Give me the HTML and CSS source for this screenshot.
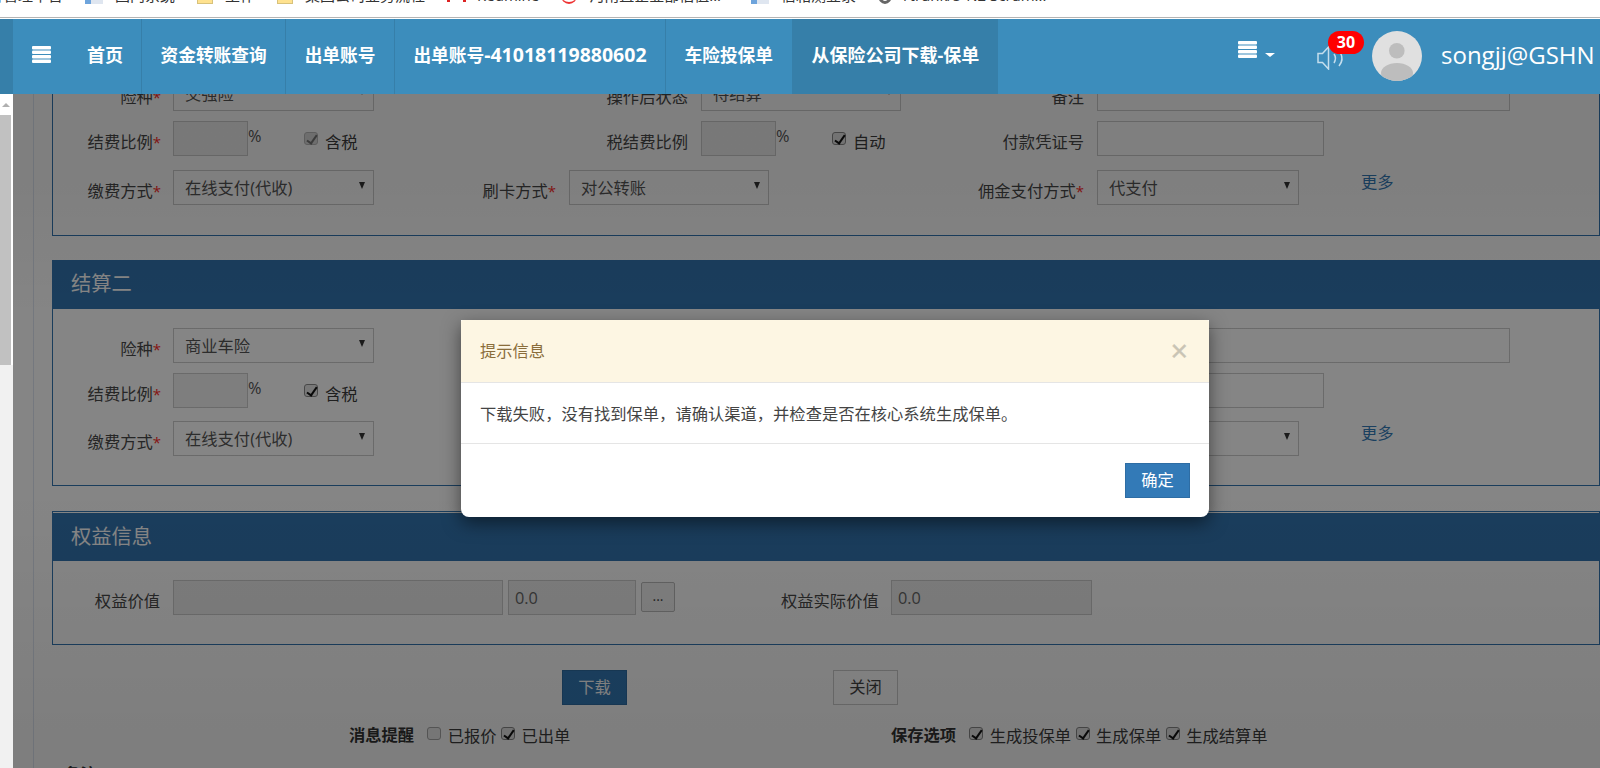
FILE: index.html
```html
<!DOCTYPE html>
<html lang="zh-CN">
<head>
<meta charset="utf-8">
<title>从保险公司下载-保单</title>
<link rel="stylesheet" href="styles.css">
</head>
<body>
<div class="page">
  <div class="bookmarks">
    <div class="bookmarks-track">
      <span class="bm-text bm-first">综合管理平台</span>
      <span class="bm-icon bm-page"></span><span class="bm-text">国内系统</span>
      <span class="bm-icon bm-folder"></span><span class="bm-text">工作</span>
      <span class="bm-icon bm-folder"></span><span class="bm-text">集团公司业务流程</span>
      <span class="bm-icon bm-red"></span><span class="bm-text">Redmine</span>
      <span class="bm-icon bm-swirl"></span><span class="bm-text bm-long">河南直企业部估值...</span>
      <span class="bm-icon bm-page"></span><span class="bm-text">信箱测登录</span>
      <span class="bm-icon bm-globe"></span><span class="bm-text">/trunk/5-N2 Scrum...</span>
    </div>
  </div>

  <nav class="navbar">
    <div class="nav-left">
      <div class="nav-toggle-edge"></div>
      <div class="nav-toggle">
        <svg class="bars" width="19" height="17" viewBox="0 0 19 17"><rect width="19" height="3.4" rx="1" y="0" fill="#fff"/><rect width="19" height="3.4" rx="1" y="4.5" fill="#fff"/><rect width="19" height="3.4" rx="1" y="9" fill="#fff"/><rect width="19" height="3.4" rx="1" y="13.6" fill="#fff"/></svg>
      </div>
      <a class="nav-item nav-home">首页</a>
      <a class="nav-item">资金转账查询</a>
      <a class="nav-item">出单账号</a>
      <a class="nav-item">出单账号<span class="nav-num">-41018119880602</span></a>
      <a class="nav-item">车险投保单</a>
      <a class="nav-item nav-active">从保险公司下载-保单</a>
    </div>
    <div class="nav-right">
      <svg class="bars" width="19" height="17" viewBox="0 0 19 17"><rect width="19" height="3.4" rx="1" y="0" fill="#fff"/><rect width="19" height="3.4" rx="1" y="4.5" fill="#fff"/><rect width="19" height="3.4" rx="1" y="9" fill="#fff"/><rect width="19" height="3.4" rx="1" y="13.6" fill="#fff"/></svg>
      <span class="nav-caret"></span>
      <span class="speaker">
        <svg width="29" height="24" viewBox="0 0 29 24" fill="none" stroke="#c4deed" stroke-width="1.5"><path d="M1 7.5h4.5L11.5 1v22l-6-6.5H1z"/><path d="M17 8c1.800 2.500 1.800 6 0 9"/><path d="M23.500 7c2.200 4 1.800 9-1.500 13"/></svg>
        <span class="badge">30</span>
      </span>
      <svg class="avatar" width="50" height="50" viewBox="0 0 50 50"><defs><clipPath id="avatar-clip"><circle cx="25" cy="25" r="25"/></clipPath></defs><circle cx="25" cy="25" r="25" fill="#e0e0e0"/><g clip-path="url(#avatar-clip)" fill="#bdbdbd"><circle cx="24.800" cy="19.700" r="7.800"/><ellipse cx="25" cy="42" rx="16" ry="10"/></g></svg>
      <span class="user">songjj@GSHN</span>
    </div>
  </nav>

  <div class="workspace">
    <div class="scrollbar">
      <div class="scroll-top"><span class="scroll-arrow"></span></div>
      <div class="scroll-thumb-wrap"><div class="scroll-thumb"></div></div>
      <div class="scroll-rest"></div>
    </div>
    <main class="content">
      <div class="content-inner">
        <section class="panel panel-first">
          <h2 class="panel-title">结算一</h2>
          <div class="panel-body">
            <div class="row row-a">
              <div class="field"><label class="label l-a">险种<i>*</i></label><div class="select s-201"><select><option>交强险</option></select></div></div>
              <div class="field"><label class="label l-b">操作后状态</label><div class="select s-200"><select><option>待结算</option></select></div></div>
              <div class="field"><label class="label l-d">备注</label><input class="input i-wide"></div>
            </div>
            <div class="row row-b">
              <div class="field"><label class="label l-a">结费比例<i>*</i></label><input class="input i-rate is-grey"><span class="pct">%</span><span class="check-gap"><input type="checkbox" class="cb cb-disabled" checked disabled><span class="cb-label">含税</span></span></div>
              <div class="field"><label class="label l-b">税结费比例</label><input class="input i-rate is-grey"><span class="pct">%</span><span class="check-gap"><input type="checkbox" class="cb" checked><span class="cb-label">自动</span></span></div>
              <div class="field"><label class="label l-d">付款凭证号</label><input class="input i-voucher"></div>
            </div>
            <div class="row">
              <div class="field"><label class="label l-a">缴费方式<i>*</i></label><div class="select s-201"><select><option>在线支付(代收)</option></select></div></div>
              <div class="field"><label class="label l-c">刷卡方式<i>*</i></label><div class="select s-200"><select><option>对公转账</option></select></div></div>
              <div class="field"><label class="label l-f">佣金支付方式<i>*</i></label><div class="select s-202"><select><option>代支付</option></select></div><a class="more">更多</a></div>
            </div>
          </div>
        </section>

        <section class="panel panel-second">
          <h2 class="panel-title">结算二</h2>
          <div class="panel-body">
            <div class="row row-a">
              <div class="field"><label class="label l-a">险种<i>*</i></label><div class="select s-201"><select><option>商业车险</option></select></div></div>
              <div class="field"><label class="label l-b">操作后状态</label><div class="select s-200"><select><option>待结算</option></select></div></div>
              <div class="field"><label class="label l-d">备注</label><input class="input i-wide"></div>
            </div>
            <div class="row row-b">
              <div class="field"><label class="label l-a">结费比例<i>*</i></label><input class="input i-rate is-grey"><span class="pct">%</span><span class="check-gap"><input type="checkbox" class="cb" checked><span class="cb-label">含税</span></span></div>
              <div class="field"><label class="label l-b">税结费比例</label><input class="input i-rate is-grey"><span class="pct">%</span><span class="check-gap"><input type="checkbox" class="cb" checked><span class="cb-label">自动</span></span></div>
              <div class="field"><label class="label l-d">付款凭证号</label><input class="input i-voucher"></div>
            </div>
            <div class="row">
              <div class="field"><label class="label l-a">缴费方式<i>*</i></label><div class="select s-201"><select><option>在线支付(代收)</option></select></div></div>
              <div class="field"><label class="label l-c">刷卡方式<i>*</i></label><div class="select s-200"><select><option>对公转账</option></select></div></div>
              <div class="field"><label class="label l-f">佣金支付方式<i>*</i></label><div class="select s-202"><select><option>代支付</option></select></div><a class="more">更多</a></div>
            </div>
          </div>
        </section>

        <section class="panel panel-third">
          <h2 class="panel-title">权益信息</h2>
          <div class="panel-body equity">
            <label class="label l-g">权益价值</label>
            <input class="input i-equity is-dark">
            <input class="input i-value is-dark" value="0.0">
            <button class="dots">...</button>
            <label class="label l-e">权益实际价值</label>
            <input class="input i-real is-dark" value="0.0">
          </div>
        </section>

        <div class="actions">
          <button class="btn btn-primary">下载</button>
          <button class="btn btn-plain">关闭</button>
        </div>

        <div class="options">
          <div class="opt-group opt-first">
            <strong class="opt-title">消息提醒</strong>
            <input type="checkbox" class="cb cb-off"><span class="cb-label">已报价</span>
            <input type="checkbox" class="cb" checked><span class="cb-label">已出单</span>
          </div>
          <div class="opt-group">
            <strong class="opt-title">保存选项</strong>
            <input type="checkbox" class="cb" checked><span class="cb-label">生成投保单</span>
            <input type="checkbox" class="cb" checked><span class="cb-label">生成保单</span>
            <input type="checkbox" class="cb" checked><span class="cb-label">生成结算单</span>
          </div>
        </div>

        <strong class="cut-title">备注</strong>
      </div>
      <div class="backdrop"></div>
    </main>
  </div>

  <div class="modal">
    <div class="modal-header">
      <span class="modal-title">提示信息</span>
      <span class="modal-close">×</span>
    </div>
    <div class="modal-body">下载失败，没有找到保单，请确认渠道，并检查是否在核心系统生成保单。</div>
    <div class="modal-footer"><button class="btn btn-ok">确定</button></div>
  </div>
</div>
</body>
</html>
```

FILE: styles.css
```css
* { box-sizing: border-box; }
html, body { margin: 0; padding: 0; }
body {
  background: #fff;
  font-family: "Open Sans", "Noto Sans CJK SC", sans-serif;
  font-size: 16.3px;
  line-height: 20px;
  color: #444;
}
.page { position: relative; width: 1600px; height: 768px; overflow: hidden; }

/* bookmarks bar, cropped at the top */
.bookmarks { position: relative; height: 19px; background: #fff; overflow: hidden; }
.bookmarks::after { content: ""; position: absolute; left: 0; right: 0; top: 17px; height: 1px; background: #b4b4b4; }
.bookmarks-track { display: flex; align-items: flex-end; height: 17px; transform: translateY(-13px); font-size: 15px; color: #333; white-space: nowrap; }
.bm-text { margin-right: 22px; line-height: 17px; }
.bm-first { margin-left: -27px; }
.bm-long { margin-right: 30px; }
.bm-icon { width: 18px; height: 17px; margin-right: 12px; flex: none; }
.bm-page { background: linear-gradient(90deg, #6ea4dc 0 35%, #dfe6f0 35% 100%); }
.bm-folder { width: 16px; background: #ffe28f; border: 1px solid #d8c27c; }
.bm-red { width: 20px; height: 15px; margin: 0 10px 2px 0; background: linear-gradient(90deg, #d22 0 3px, #fff 3px 16px, #d22 16px 19px, #fff 19px); }
.bm-swirl { width: 16px; border-bottom: 2px solid #e33; border-radius: 50%; }
.bm-globe { width: 14px; border: 3px solid #666; border-radius: 50%; }

/* top navigation */
.navbar {
  position: absolute; left: 0; top: 19px; z-index: 30;
  width: 1600px; height: 75px;
  background: #3c8dbc; color: #fff;
  display: flex; justify-content: space-between;
}
.nav-left { display: flex; align-items: stretch; }
.nav-toggle-edge { width: 13px; background: #367fa9; }
.nav-toggle { width: 56px; display: flex; align-items: center; justify-content: center; padding-bottom: 4px; }
.bars { display: block; flex: none; }
.nav-item {
  display: flex; align-items: center; padding: 0 18.500px 3px;
  border-right: 1px solid #367fa9;
  font-size: 17.7px; font-weight: 700; color: #fff; white-space: nowrap;
}
.nav-home { font-size: 18px; padding: 0 18px 3px 18px; }
.nav-num { font-size: 19.500px; }
.nav-active { background: #367fa9; border-right: 0; padding: 0 19px 3px; font-size: 18px; }
.nav-right { width: 362px; display: flex; align-items: center; padding-bottom: 6px; }
.nav-right > .bars { margin-top: -8px; }
.nav-caret { width: 0; height: 0; margin: 3px 0 0 8px; border-left: 5px solid transparent; border-right: 5px solid transparent; border-top: 4px solid #fff; }
.speaker { position: relative; display: block; width: 29px; height: 24px; margin: 8px 0 0 42px; }
.speaker svg { display: block; }
.badge {
  position: absolute; left: 11px; top: -15px; width: 36px; height: 23px;
  border-radius: 11.500px; background: #f00; color: #fff;
  font-size: 16px; font-weight: 700; line-height: 22px; text-align: center;
}
.avatar { display: block; flex: none; margin: 4px 0 0 26px; }
.user { margin: 2px 0 0 19px; font-size: 24px; line-height: 30px; white-space: nowrap; color: #fff; }

/* work area */
.workspace { display: flex; height: 749px; }
.scrollbar { width: 13px; flex: none; display: flex; flex-direction: column; background: #f1f1f1; }
.scroll-top { height: 96px; background: #fff; display: flex; align-items: flex-end; justify-content: center; padding: 0 2px 8px 0; }
.scroll-arrow { width: 0; height: 0; border-left: 4px solid transparent; border-right: 4px solid transparent; border-bottom: 4px solid #b0b0b0; }
.scroll-thumb-wrap { height: 250px; background: #fff; padding-right: 2px; }
.scroll-thumb { height: 100%; background: #c1c1c1; }
.scroll-rest { flex: 1; }

.content { position: relative; flex: 1; overflow: hidden; background: #fff; }
.content-inner { margin-top: -11px; margin-left: 20px; height: 760px; border-left: 1px solid #dfe6f2; padding-left: 18px; }
.backdrop {
  position: absolute; inset: 0;
  background: linear-gradient(180deg, rgba(0,0,0,.5) 0, rgba(0,0,0,.5) 22%, rgba(0,0,0,.48) 40%, rgba(0,0,0,.48) 62%, rgba(0,0,0,.505) 95%);
}

/* panels */
.panel { border: 1px solid #3275b1; background: #fff; }
.panel-second { margin-top: 24px; }
.panel-third { margin-top: 25px; padding-top: 1px; }
.panel-title { margin: 0; height: 48px; padding-left: 18px; background: #3275b1; color: #fff; font-size: 20.300px; font-weight: 400; line-height: 44px; }
.panel-third .panel-title { line-height: 46px; }
.panel-body { padding: 19px 0 29px; }
.panel-first .panel-body { padding-bottom: 30px; }
.row { display: grid; grid-template-columns: 400px 530px 1fr; height: 35px; }
.row-a { margin-bottom: 10px; }
.row-b { margin-bottom: 13px; }
.panel-first .row-b { margin-bottom: 14px; }
.field { display: flex; align-items: flex-start; }

.label { flex: none; padding-top: 11px; margin-right: 13px; text-align: right; white-space: nowrap; line-height: 20px; color: #484848; }
.label i { color: #ff2a2a; font-style: normal; font-size: 15px; }
.l-a { width: 108px; margin-right: 12px; }
.l-b { width: 235px; }
.l-c { width: 103px; }
.l-d { width: 101px; }
.l-e { width: 97px; margin-left: 106px; }
.l-f { width: 106px; margin-left: -5px; margin-right: 13px; }
.l-g { width: 107px; }

.input { display: block; flex: none; height: 35px; padding: 0 6px; border: 1px solid #ccc; background: #fff; font: inherit; color: #666; outline: 0; }
.is-grey { background: #f1f1f1; }
.is-dark { background: #eee; }
.i-wide { width: 413px; }
.i-rate { width: 75px; }
.i-voucher { width: 227px; }
.i-equity { width: 330px; }
.i-value { width: 128px; margin-left: 5px; }
.i-real { width: 201px; }

.pct { flex: none; width: 14px; padding-top: 5px; line-height: 20px; color: #555; }
.check-gap { display: flex; align-items: flex-start; margin-left: 42px; padding-top: 11px; }

.cb {
  appearance: none; -webkit-appearance: none;
  position: relative; display: block; flex: none;
  width: 14px; height: 13px; margin: 0;
  border: 1px solid #8a8a8a; border-radius: 3px; background: #e6e6e6;
}
.cb:checked::after {
  content: ""; position: absolute; left: 4px; top: 0; width: 4px; height: 9px;
  border: solid #111; border-width: 0 2px 2px 0; transform: rotate(35deg);
}
.cb-disabled { background: #dcdcdc; border-color: #bbb; }
.cb-disabled:checked::after { border-color: #777; }
.cb-off { background: #eee; border-color: #aaa; }
.cb-label { margin-left: 7px; line-height: 20px; color: #3c3c3c; white-space: nowrap; }

.select { position: relative; flex: none; height: 35px; }
.s-200 { width: 200px; }
.s-201 { width: 201px; }
.s-202 { width: 202px; }
.select select {
  appearance: none; -webkit-appearance: none;
  display: block; width: 100%; height: 100%; padding: 0 20px 0 11px;
  border: 1px solid #ccc; border-radius: 0; background: #fff;
  font: inherit; color: #555; outline: 0;
}
.select::after {
  content: ""; position: absolute; right: 9px; top: 12px; width: 0; height: 0;
  border-left: 3.500px solid transparent; border-right: 3.500px solid transparent; border-top: 7px solid #333;
}
.more { margin: 0 0 0 62px; padding-top: 2px; color: #337ab7; }

.equity { display: flex; align-items: flex-start; }
.dots { flex: none; width: 34px; height: 30px; margin: 2px 0 0 5px; padding: 0 0 4px; border: 1px solid #bbb; border-radius: 2px; background: #f1f1f1; font-family: "Open Sans", sans-serif; font-size: 14px; color: #444; }

.actions { display: flex; gap: 206px; margin: 25px 0 0 510px; }
.btn { display: block; height: 35px; padding: 0; border: 1px solid transparent; border-radius: 0; font: inherit; line-height: 31px; }
.btn-primary { width: 65px; background: #337ab7; border-color: #2e6da4; color: #fff; }
.btn-plain { width: 65px; background: #fff; border-color: #ccc; color: #444; }

.options { display: flex; margin: 20px 0 0 297px; height: 20px; }
.opt-group { display: flex; align-items: flex-start; }
.opt-first { width: 542px; }
.opt-title { font-weight: 700; margin-right: 13px; color: #333; }
.opt-group .cb { margin-top: 2px; }
.opt-group .cb-label { margin: 1px 4.500px 0 6.500px; }
.cut-title { display: block; margin: 19px 0 0 12px; color: #333; font-weight: 700; }

/* dialog */
.modal {
  position: absolute; left: 461px; top: 320px; z-index: 40;
  width: 748px; height: 197px;
  background: #fff; border-radius: 0 0 8px 8px;
  box-shadow: 0 6px 18px rgba(0,0,0,.5);
  color: #333;
}
.modal-header {
  display: flex; justify-content: space-between; align-items: center;
  height: 63px; padding: 0 21px 1px 19px;
  background: #fdf6e3; border-bottom: 1px solid #e5e5e5; border-radius: 2px 2px 0 0;
}
.modal-title { color: #8a6d3b; }
.modal-close { font-family: "Liberation Sans", sans-serif; font-size: 30px; font-weight: 400; line-height: 30px; color: #000; opacity: .2; -webkit-text-stroke: .5px #000; }
.modal-body { height: 61px; padding: 21px 19px 0; border-bottom: 1px solid #e5e5e5; color: #444; white-space: nowrap; }
.modal-footer { display: flex; justify-content: flex-end; padding: 19px; }
.btn-ok { width: 65px; background: #337ab7; border-color: #2e6da4; color: #fff; }
```
